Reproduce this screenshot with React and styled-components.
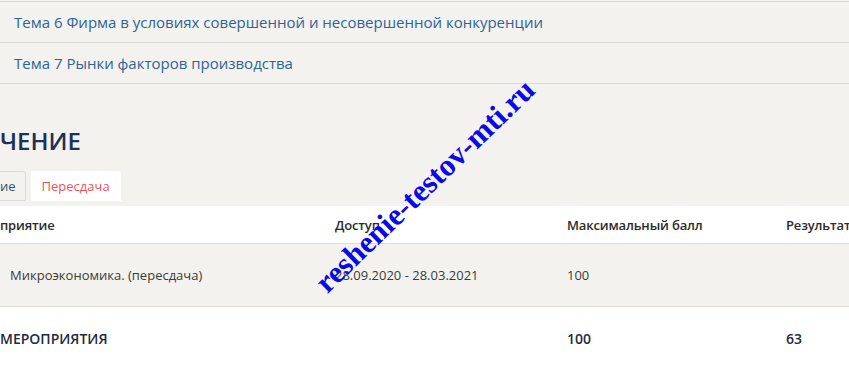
import styled, {createGlobalStyle} from "styled-components";

const GlobalStyle = createGlobalStyle`
  html, body {
    margin: 0;
    padding: 0;
    background: #f3f2ef;
    font-family: "Open Sans", "Noto Sans", sans-serif;
    overflow: hidden;
  }
`;

const Page = styled.div`
  position: relative;
  width: 849px;
  height: 366px;
  overflow: hidden;
  padding-top: 1px;
  box-sizing: border-box;
`;

const TopicList = styled.div`
  border-bottom: 1px solid #dcdbd7;
`;

const TopicRow = styled.div`
  display: flex;
  align-items: center;
  height: 40px;
  padding-left: 14px;
  border-top: 1px solid #dcdbd7;
  font-size: 15px;
  color: #2d6496;
`;

const Heading = styled.h2`
  margin: 42px 0 0 0;
  font-size: 24px;
  line-height: 30px;
  font-weight: 600;
  color: #1b3157;
`;

const Tabs = styled.div`
  display: flex;
  gap: 5px;
  margin-top: 15px;
  height: 30px;
`;

const Tab = styled.div`
  display: flex;
  align-items: center;
  padding: 0 ${(props) => (props.$active ? "11px" : "9px")};
  font-size: 13px;
  color: ${(props) => (props.$active ? "#f0525b" : "#2f5275")};
  background: ${(props) => (props.$active ? "#ffffff" : "transparent")};
  border: ${(props) => (props.$active ? "none" : "1px solid #dcdbd7")};
  border-left: none;
  border-radius: 0 3px 0 0;
  ${(props) => !props.$active && `padding-left: 0;`}
`;

const Table = styled.div`
  margin-top: 5px;
`;

const Row = styled.div`
  display: grid;
  grid-template-columns: 335px 232px 219px 1fr;
  align-items: center;
  height: ${(props) => props.$height}px;
  background: ${(props) => props.$bg};
  border-bottom: ${(props) => (props.$border ? "1px solid #dcdbd7" : "none")};
`;

const HeadCell = styled.div`
  font-size: 13px;
  font-weight: 600;
  letter-spacing: -0.15px;
  color: #2b2b2b;
  white-space: nowrap;
`;

const Cell = styled.div`
  font-size: 13px;
  color: #3a3a3a;
  padding-left: ${(props) => props.$indent || 0}px;
`;

const TotalCell = styled.div`
  font-size: 14px;
  font-weight: 600;
  color: #1d2a40;
`;

const Watermark = styled.span`
  position: absolute;
  left: 425px;
  top: 186px;
  transform: translate(-50%, -50%) rotate(-44deg);
  font-family: "Liberation Serif", "Times New Roman", serif;
  font-size: 31px;
  font-weight: 700;
  color: #0a0ae6;
  white-space: nowrap;
  pointer-events: none;
`;

export default function App() {
    return (
        <Page>
            <GlobalStyle/>
            <TopicList>
                <TopicRow>Тема 6 Фирма в условиях совершенной и несовершенной конкуренции</TopicRow>
                <TopicRow>Тема 7 Рынки факторов производства</TopicRow>
            </TopicList>
            <Heading>ЧЕНИЕ</Heading>
            <Tabs>
                <Tab>ие</Tab>
                <Tab $active>Пересдача</Tab>
            </Tabs>
            <Table>
                <Row $height={37} $bg="#ffffff" $border>
                    <HeadCell>приятие</HeadCell>
                    <HeadCell>Доступ</HeadCell>
                    <HeadCell>Максимальный балл</HeadCell>
                    <HeadCell>Результат</HeadCell>
                </Row>
                <Row $height={62} $bg="#f3f2ef" $border>
                    <Cell $indent={10}>Микроэкономика. (пересдача)</Cell>
                    <Cell>28.09.2020 - 28.03.2021</Cell>
                    <Cell>100</Cell>
                    <Cell></Cell>
                </Row>
                <Row $height={62} $bg="#ffffff">
                    <TotalCell>МЕРОПРИЯТИЯ</TotalCell>
                    <TotalCell></TotalCell>
                    <TotalCell>100</TotalCell>
                    <TotalCell>63</TotalCell>
                </Row>
            </Table>
            <Watermark>reshenie-testov-mti.ru</Watermark>
        </Page>
    );
}
